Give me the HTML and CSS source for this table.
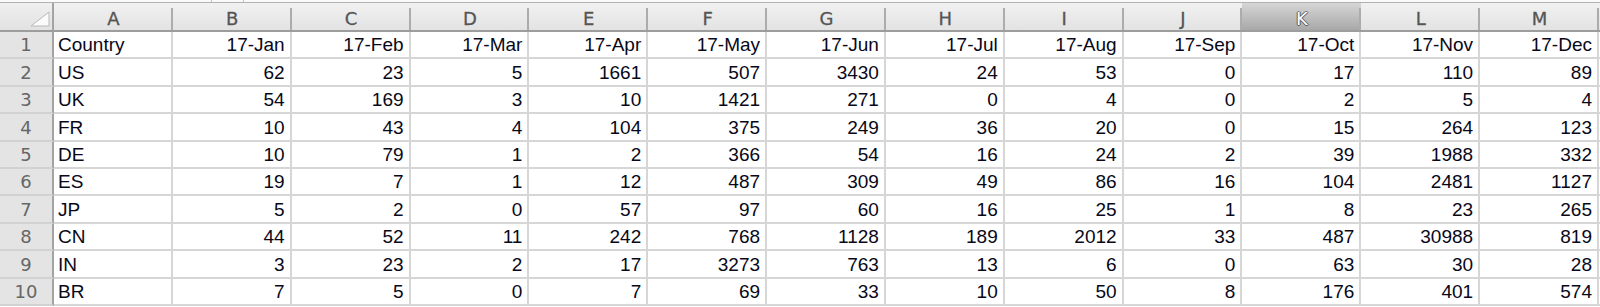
FILE: index.html
```html
<!DOCTYPE html>
<html>
<head>
<meta charset="utf-8">
<link rel="stylesheet" href="styles.css">
</head>
<body>
<div class="topbar"><span class="seg s1"></span><span class="seg s2"></span></div>
<div class="sheet">
  <div class="corner"><svg width="20" height="16" viewBox="0 0 20 16"><polygon points="19,1 19,15 1,15" fill="#fbfbfb" stroke="#b9b9b9" stroke-width="1"/></svg></div>
  <div class="ch">A</div><div class="ch">B</div><div class="ch">C</div><div class="ch">D</div><div class="ch">E</div><div class="ch">F</div><div class="ch">G</div><div class="ch">H</div><div class="ch">I</div><div class="ch">J</div><div class="ch sel">K</div><div class="ch">L</div><div class="ch">M</div><div class="ch fill"></div>

  <div class="rh">1</div><div class="c l">Country</div><div class="c">17-Jan</div><div class="c">17-Feb</div><div class="c">17-Mar</div><div class="c">17-Apr</div><div class="c">17-May</div><div class="c">17-Jun</div><div class="c">17-Jul</div><div class="c">17-Aug</div><div class="c">17-Sep</div><div class="c">17-Oct</div><div class="c">17-Nov</div><div class="c">17-Dec</div><div class="c f"></div>

  <div class="rh">2</div><div class="c l">US</div><div class="c">62</div><div class="c">23</div><div class="c">5</div><div class="c">1661</div><div class="c">507</div><div class="c">3430</div><div class="c">24</div><div class="c">53</div><div class="c">0</div><div class="c">17</div><div class="c">110</div><div class="c">89</div><div class="c f"></div>

  <div class="rh">3</div><div class="c l">UK</div><div class="c">54</div><div class="c">169</div><div class="c">3</div><div class="c">10</div><div class="c">1421</div><div class="c">271</div><div class="c">0</div><div class="c">4</div><div class="c">0</div><div class="c">2</div><div class="c">5</div><div class="c">4</div><div class="c f"></div>

  <div class="rh">4</div><div class="c l">FR</div><div class="c">10</div><div class="c">43</div><div class="c">4</div><div class="c">104</div><div class="c">375</div><div class="c">249</div><div class="c">36</div><div class="c">20</div><div class="c">0</div><div class="c">15</div><div class="c">264</div><div class="c">123</div><div class="c f"></div>

  <div class="rh">5</div><div class="c l">DE</div><div class="c">10</div><div class="c">79</div><div class="c">1</div><div class="c">2</div><div class="c">366</div><div class="c">54</div><div class="c">16</div><div class="c">24</div><div class="c">2</div><div class="c">39</div><div class="c">1988</div><div class="c">332</div><div class="c f"></div>

  <div class="rh">6</div><div class="c l">ES</div><div class="c">19</div><div class="c">7</div><div class="c">1</div><div class="c">12</div><div class="c">487</div><div class="c">309</div><div class="c">49</div><div class="c">86</div><div class="c">16</div><div class="c">104</div><div class="c">2481</div><div class="c">1127</div><div class="c f"></div>

  <div class="rh">7</div><div class="c l">JP</div><div class="c">5</div><div class="c">2</div><div class="c">0</div><div class="c">57</div><div class="c">97</div><div class="c">60</div><div class="c">16</div><div class="c">25</div><div class="c">1</div><div class="c">8</div><div class="c">23</div><div class="c">265</div><div class="c f"></div>

  <div class="rh">8</div><div class="c l">CN</div><div class="c">44</div><div class="c">52</div><div class="c">11</div><div class="c">242</div><div class="c">768</div><div class="c">1128</div><div class="c">189</div><div class="c">2012</div><div class="c">33</div><div class="c">487</div><div class="c">30988</div><div class="c">819</div><div class="c f"></div>

  <div class="rh">9</div><div class="c l">IN</div><div class="c">3</div><div class="c">23</div><div class="c">2</div><div class="c">17</div><div class="c">3273</div><div class="c">763</div><div class="c">13</div><div class="c">6</div><div class="c">0</div><div class="c">63</div><div class="c">30</div><div class="c">28</div><div class="c f"></div>

  <div class="rh">10</div><div class="c l">BR</div><div class="c">7</div><div class="c">5</div><div class="c">0</div><div class="c">7</div><div class="c">69</div><div class="c">33</div><div class="c">10</div><div class="c">50</div><div class="c">8</div><div class="c">176</div><div class="c">401</div><div class="c">574</div><div class="c f"></div>
</div>
</body>
</html>
```

FILE: styles.css
```css
html, body {
  margin: 0;
  padding: 0;
  background: #ffffff;
  overflow: hidden;
}

.topbar {
  height: 2px;
  border-bottom: 1px solid #b2b2b2;
  background: #fafafa;
  display: flex;
}

.topbar .seg {
  width: 1px;
  height: 2px;
  background: #c4c4c4;
}

.topbar .s1 { margin-left: 211px; }
.topbar .s2 { margin-left: 31px; }

.sheet {
  display: grid;
  grid-template-columns: 54px repeat(13, 118.85px) 1fr;
  grid-template-rows: 29px repeat(10, 27.4px);
}

.corner {
  box-sizing: border-box;
  background: linear-gradient(#efefef, #e2e2e2);
  border-right: 2px solid #a3a3a3;
  border-bottom: 2px solid #9d9d9d;
  display: flex;
  justify-content: flex-end;
  align-items: flex-end;
  padding: 0 2px 3px 0;
}

.corner svg { display: block; }

.ch {
  position: relative;
  box-sizing: border-box;
  background: linear-gradient(#f1f1f1, #e3e3e3);
  border-bottom: 2px solid #9d9d9d;
  font-family: "DejaVu Sans", sans-serif;
  font-size: 18px;
  color: #555555;
  display: flex;
  justify-content: center;
  align-items: flex-end;
  padding-bottom: 1px;
  line-height: 20px;
  -webkit-text-stroke: 0.3px #555555;
}

.ch::after {
  content: "";
  position: absolute;
  right: 0;
  top: 5px;
  bottom: 0;
  width: 2px;
  background: #acacac;
}

.ch.fill::after { display: none; }

.ch.sel {
  background: linear-gradient(#d6d6d6, #a8a8a8);
  color: #ffffff;
  -webkit-text-stroke: 0;
  text-shadow: 1px 0 0 #5a5a5a, -1px 0 0 #5a5a5a, 0 1px 0 #5a5a5a, 0 -1px 0 #7a7a7a;
}

.rh {
  box-sizing: border-box;
  background: #e4e4e4;
  border-right: 2px solid #a3a3a3;
  border-bottom: 2px solid #d2d2d2;
  font-family: "DejaVu Sans", sans-serif;
  font-size: 18px;
  color: #666666;
  display: flex;
  justify-content: center;
  align-items: flex-end;
  line-height: 22px;
  padding-bottom: 1px;
}

.c {
  box-sizing: border-box;
  background: #ffffff;
  border-right: 2px solid #d6d6d6;
  border-bottom: 2px solid #d6d6d6;
  font-family: "Liberation Sans", Arial, sans-serif;
  font-size: 19px;
  color: #080818;
  display: flex;
  justify-content: flex-end;
  align-items: flex-end;
  padding: 0 5px 1px 4px;
  line-height: 22px;
  white-space: nowrap;
}

.c.l { justify-content: flex-start; }

.c.f { border-right: none; }
```
